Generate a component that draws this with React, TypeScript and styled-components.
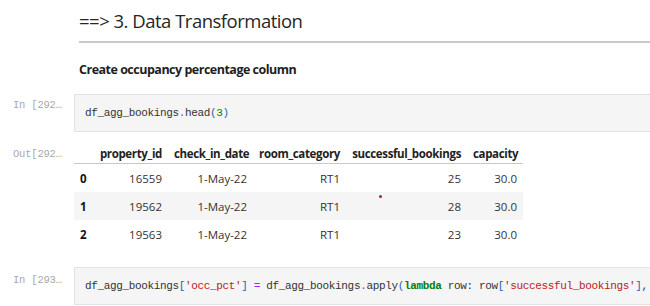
import styled, { createGlobalStyle } from "styled-components";

const GlobalStyle = createGlobalStyle`
    html, body {
        margin: 0;
        padding: 0;
        background: #ffffff;
        overflow: hidden;
    }
`;

const Notebook = styled.div`
    width: 700px;
    display: flex;
    flex-direction: column;
    font-family: "Open Sans", "Noto Sans", sans-serif;
    color: #222;
`;

const Cell = styled.div<{ $top?: number }>`
    display: flex;
    align-items: flex-start;
    margin-top: ${(p) => p.$top ?? 0}px;
`;

const Prompt = styled.div<{ $pad?: number }>`
    width: 74px;
    flex-shrink: 0;
    box-sizing: border-box;
    padding: ${(p) => p.$pad ?? 0}px 0 0 13px;
    font-family: "Liberation Mono", "DejaVu Sans Mono", monospace;
    font-size: 10.5px;
    line-height: 16px;
    color: #a8a8a8;
    white-space: nowrap;
    letter-spacing: -0.2px;
`;

const Markdown = styled.div`
    flex: 1;
    padding-left: 5px;
`;

const Heading = styled.h2`
    margin: 8px 0 0;
    font-size: 18.5px;
    font-weight: 400;
    line-height: 26px;
    padding-bottom: 7px;
    border-bottom: 2px solid #c9c9c9;
    color: #262626;
    letter-spacing: -0.5px;
`;

const Bold = styled.p`
    margin: 18px 0 0;
    font-size: 12.5px;
    line-height: 18px;
    font-weight: 700;
    color: #1e1e1e;
    letter-spacing: -0.5px;
`;

const CodeBox = styled.div`
    flex: 1;
    background: #f5f5f5;
    border: 1px solid #e2e2e2;
    padding: 10px 10px;
    font-family: "Liberation Mono", "DejaVu Sans Mono", monospace;
    font-size: 11px;
    line-height: 16px;
    letter-spacing: -0.35px;
    color: #333;
    white-space: pre;
    overflow: hidden;
`;

type TokKind = "op" | "num" | "str" | "kw" | "br";

const tokColors: Record<TokKind, string> = {
    op: "#aa22ff",
    num: "#008000",
    str: "#ba2121",
    kw: "#008000",
    br: "#2763b0",
};

const Tok = styled.span<{ $kind: TokKind }>`
    color: ${(p) => tokColors[p.$kind]};
    font-weight: ${(p) => (p.$kind === "kw" ? 700 : 400)};
`;

const Table = styled.table`
    margin-top: 11px;
    width: 449px;
    border-collapse: collapse;
    table-layout: fixed;
    font-size: 11.5px;
    color: #222;
`;

const Th = styled.th`
    padding: 0 6px;
    height: 20px;
    text-align: right;
    font-weight: 700;
    white-space: nowrap;
    border-bottom: 1px solid #c8c8c8;
    letter-spacing: -0.35px;
`;

const Row = styled.tr<{ $alt?: boolean }>`
    background: ${(p) => (p.$alt ? "#f5f5f5" : "transparent")};
`;

const Td = styled.td<{ $head?: boolean }>`
    height: 28px;
    padding: 0 6px;
    text-align: ${(p) => (p.$head ? "left" : "right")};
    font-weight: ${(p) => (p.$head ? 700 : 400)};
    color: ${(p) => (p.$head ? "#111" : "#333")};
    white-space: nowrap;
`;

const OutWrap = styled.div`
    position: relative;
`;

const Dot = styled.span`
    position: absolute;
    left: 305px;
    top: 63px;
    width: 3px;
    height: 3px;
    border-radius: 50%;
    background: #c8102e;
`;

const columns = [
    { key: "", w: 18 },
    { key: "property_id", w: 76 },
    { key: "check_in_date", w: 85 },
    { key: "room_category", w: 93 },
    { key: "successful_bookings", w: 121 },
    { key: "capacity", w: 56 },
];

const rows = [
    ["0", "16559", "1-May-22", "RT1", "25", "30.0"],
    ["1", "19562", "1-May-22", "RT1", "28", "30.0"],
    ["2", "19563", "1-May-22", "RT1", "23", "30.0"],
];

export default function App() {
    return (
        <>
            <GlobalStyle />
            <Notebook>
                <Cell>
                    <Prompt />
                    <Markdown>
                        <Heading>==&gt; 3. Data Transformation</Heading>
                        <Bold>Create occupancy percentage column</Bold>
                    </Markdown>
                </Cell>

                <Cell $top={15}>
                    <Prompt $pad={3}>In [292…</Prompt>
                    <CodeBox>
                        df_agg_bookings<Tok $kind="op">.</Tok>head<Tok $kind="br">(</Tok>
                        <Tok $kind="num">3</Tok>
                        <Tok $kind="br">)</Tok>
                    </CodeBox>
                </Cell>

                <Cell>
                    <Prompt $pad={14}>Out[292…</Prompt>
                    <OutWrap>
                        <Table>
                            <colgroup>
                                {columns.map((c) => (
                                    <col key={c.key} style={{ width: c.w }} />
                                ))}
                            </colgroup>
                            <thead>
                                <tr>
                                    {columns.map((c) => (
                                        <Th key={c.key}>{c.key}</Th>
                                    ))}
                                </tr>
                            </thead>
                            <tbody>
                                {rows.map((r, i) => (
                                    <Row key={r[0]} $alt={i === 1}>
                                        {r.map((v, j) => (
                                            <Td key={j} $head={j === 0}>{v}</Td>
                                        ))}
                                    </Row>
                                ))}
                            </tbody>
                        </Table>
                        <Dot />
                    </OutWrap>
                </Cell>

                <Cell $top={19}>
                    <Prompt $pad={5}>In [293…</Prompt>
                    <CodeBox>
                        df_agg_bookings<Tok $kind="br">[</Tok>
                        <Tok $kind="str">'occ_pct'</Tok>
                        <Tok $kind="br">]</Tok> <Tok $kind="op">=</Tok> df_agg_bookings
                        <Tok $kind="op">.</Tok>apply<Tok $kind="br">(</Tok>
                        <Tok $kind="kw">lambda</Tok> row: row<Tok $kind="br">[</Tok>
                        <Tok $kind="str">'successful_bookings'</Tok>
                        <Tok $kind="br">]</Tok>, row<Tok $kind="br">[</Tok>
                        <Tok $kind="str">'capacity'</Tok>
                        <Tok $kind="br">]</Tok>
                    </CodeBox>
                </Cell>
            </Notebook>
        </>
    );
}
